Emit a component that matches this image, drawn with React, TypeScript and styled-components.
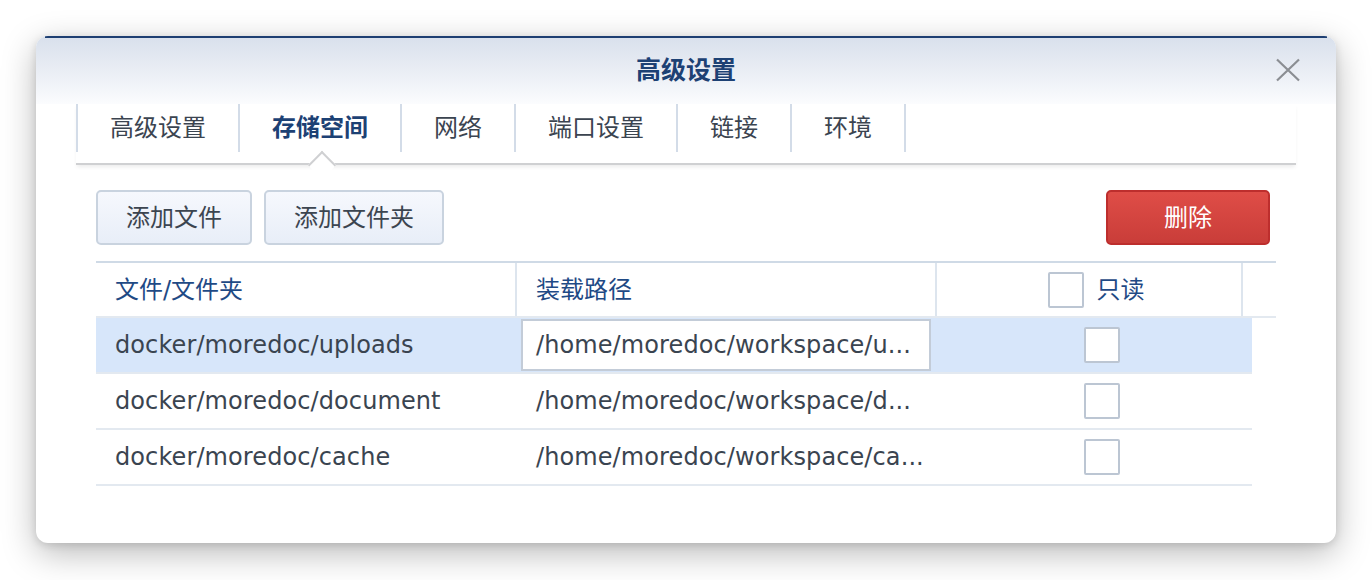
import React from "react";
import styled, { createGlobalStyle, css } from "styled-components";

const GlobalStyle = createGlobalStyle`
  html, body { margin: 0; padding: 0; background: #ffffff; }
  body {
    font-family: "DejaVu Sans", "Noto Sans CJK SC", sans-serif;
    color: #3a4450;
  }
  * { box-sizing: border-box; }
`;

const Page = styled.div`
  padding: 36px 36px 0 36px;
  width: 1372px;
  height: 580px;
  overflow: hidden;
`;

const Dialog = styled.div`
  position: relative;
  width: 1300px;
  height: 507px;
  background: #ffffff;
  border-radius: 12px;
  box-shadow: 0 10px 34px rgba(0, 0, 0, 0.28), 0 2px 8px rgba(0, 0, 0, 0.12);
  display: flex;
  flex-direction: column;
  overflow: hidden;
  &::before {
    content: "";
    position: absolute;
    z-index: 2;
    top: 0;
    left: 9px;
    right: 9px;
    height: 2px;
    background: #1e3f72;
  }
`;

const Header = styled.div`
  position: relative;
  height: 68px;
  padding-top: 2px;
  display: flex;
  align-items: center;
  justify-content: center;
  background: linear-gradient(to bottom, #d8e0ec 0%, #e9edf4 50%, #fbfcfe 100%);
`;

const Title = styled.div`
  font-size: 25px;
  font-weight: bold;
  color: #1d4174;
  line-height: 30px;
`;

const CloseButton = styled.button`
  position: absolute;
  right: 35px;
  top: 22px;
  width: 26px;
  height: 24px;
  padding: 0;
  border: none;
  background: transparent;
  display: flex;
  align-items: center;
  justify-content: center;
`;

const TabStrip = styled.div`
  margin: 0 40px;
  padding-bottom: 11px;
  display: flex;
  border-bottom: 2px solid #cfd0d2;
  box-shadow: 0 3px 4px -1px rgba(0, 0, 0, 0.08);
`;

const Tab = styled.div<{ $active?: boolean }>`
  position: relative;
  height: 48px;
  padding: 0 32px;
  border-left: 2px solid #d3dce8;
  display: flex;
  align-items: center;
  font-size: 24px;
  line-height: 30px;
  color: #3b4450;
  &:last-child { border-right: 2px solid #d3dce8; }
  ${(p) =>
    p.$active &&
    css`
      color: #1d4174;
      font-weight: bold;
      &::after {
        content: "";
        position: absolute;
        left: calc(50% + 1px - 9px);
        top: 51px;
        width: 18px;
        height: 18px;
        background: #ffffff;
        border-top: 2px solid #cfd0d2;
        border-left: 2px solid #cfd0d2;
        transform: rotate(45deg);
      }
    `}
`;

const Content = styled.div`
  padding: 25px 60px 0 60px;
  display: flex;
  flex-direction: column;
`;

const Toolbar = styled.div`
  display: flex;
  align-items: center;
  gap: 12px;
  padding-right: 6px;
`;

const Spacer = styled.div`
  flex: 1;
`;

const Button = styled.button<{ $danger?: boolean }>`
  height: 55px;
  padding: 0 28px;
  border-radius: 5px;
  font-family: inherit;
  font-size: 24px;
  line-height: 30px;
  cursor: pointer;
  border: 2px solid #c9d3df;
  background: linear-gradient(to bottom, #f6f8fd, #e8eef8);
  color: #3c4550;
  ${(p) =>
    p.$danger &&
    css`
      width: 164px;
      border-color: #bd2e2d;
      background: linear-gradient(to bottom, #df4d47, #c93d39);
      color: #ffffff;
    `}
`;

const Table = styled.div`
  margin-top: 16px;
  display: flex;
  flex-direction: column;
`;

const HeadRow = styled.div`
  height: 57px;
  display: grid;
  grid-template-columns: 421px 420px 306px 33px;
  border-top: 2px solid #cfdae6;
  border-bottom: 2px solid #e3e9f0;
`;

const HeadCell = styled.div<{ $center?: boolean }>`
  display: flex;
  align-items: center;
  padding-left: 19px;
  font-size: 24px;
  line-height: 30px;
  color: #1f4a85;
  border-right: 2px solid #dde5ee;
  &:last-child { border-right: none; }
  ${(p) =>
    p.$center &&
    css`
      justify-content: center;
      padding-left: 14px;
      gap: 13px;
    `}
`;

const Row = styled.div<{ $selected?: boolean }>`
  width: 1156px;
  height: 56px;
  display: grid;
  grid-template-columns: 421px 420px 1fr;
  border-bottom: 2px solid #e3e9f0;
  background: ${(p) => (p.$selected ? "#d7e6fa" : "transparent")};
`;

const Cell = styled.div<{ $center?: boolean }>`
  display: flex;
  align-items: center;
  padding-left: 19px;
  font-size: 24px;
  line-height: 30px;
  color: #3a4450;
  white-space: nowrap;
  overflow: hidden;
  letter-spacing: 0.1px;
  ${(p) =>
    p.$center &&
    css`
      justify-content: center;
      padding-left: 15px;
    `}
`;

const PathInput = styled.div`
  margin-left: -15px;
  width: 410px;
  height: 52px;
  padding-left: 13px;
  display: flex;
  align-items: center;
  background: #ffffff;
  border: 2px solid #c3ccd8;
  white-space: nowrap;
  overflow: hidden;
`;

const Checkbox = styled.span`
  display: inline-block;
  width: 36px;
  height: 36px;
  background: #ffffff;
  border: 2px solid #bcc6d3;
  border-radius: 2px;
  flex: none;
`;

const tabs = ["高级设置", "存储空间", "网络", "端口设置", "链接", "环境"];

const rows = [
  { src: "docker/moredoc/uploads", dst: "/home/moredoc/workspace/u...", selected: true },
  { src: "docker/moredoc/document", dst: "/home/moredoc/workspace/d...", selected: false },
  { src: "docker/moredoc/cache", dst: "/home/moredoc/workspace/ca...", selected: false },
];

export default function App() {
  return (
    <Page>
      <GlobalStyle />
      <Dialog>
        <Header>
          <Title>高级设置</Title>
          <CloseButton aria-label="close">
            <svg width="26" height="24" viewBox="0 0 26 24">
              <path d="M2 1.5 L24 22.5 M24 1.5 L2 22.5" stroke="#8b8e93" strokeWidth="2.2" fill="none" />
            </svg>
          </CloseButton>
        </Header>
        <TabStrip>
          {tabs.map((t, i) => (
            <Tab key={t} $active={i === 1}>
              {t}
            </Tab>
          ))}
        </TabStrip>
        <Content>
          <Toolbar>
            <Button>添加文件</Button>
            <Button>添加文件夹</Button>
            <Spacer />
            <Button $danger>删除</Button>
          </Toolbar>
          <Table>
            <HeadRow>
              <HeadCell>文件/文件夹</HeadCell>
              <HeadCell>装载路径</HeadCell>
              <HeadCell $center>
                <Checkbox />
                只读
              </HeadCell>
              <HeadCell />
            </HeadRow>
            {rows.map((r) => (
              <Row key={r.src} $selected={r.selected}>
                <Cell>{r.src}</Cell>
                <Cell>{r.selected ? <PathInput>{r.dst}</PathInput> : r.dst}</Cell>
                <Cell $center>
                  <Checkbox />
                </Cell>
              </Row>
            ))}
          </Table>
        </Content>
      </Dialog>
    </Page>
  );
}
